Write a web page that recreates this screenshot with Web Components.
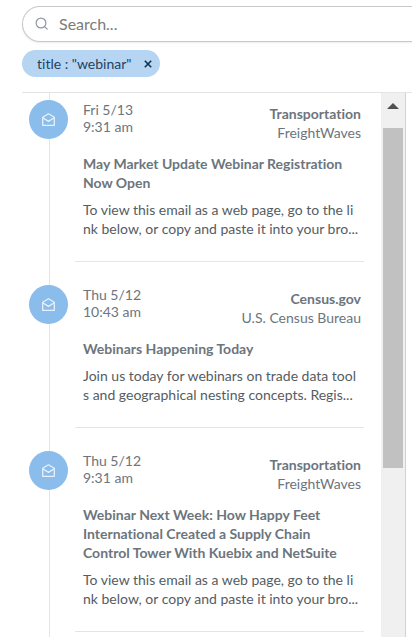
<!DOCTYPE html>
<html lang="en">
<head>
<meta charset="utf-8">
<meta name="viewport" content="width=device-width, initial-scale=1">
<title>Mail search</title>
<style>
    body {
        margin: 0;
        background: #fff;
        color: #6c757d;
        font-family: Lato, "Open Sans", sans-serif;
        font-size: 14px;
        font-variant-ligatures: none;
    }
</style>
</head>
<body>
<mail-panel>
    <search-box slot="search" placeholder="Search..."></search-box>
    <filter-chip slot="filters">title : "webinar"</filter-chip>

    <mail-item>
        <span slot="date">Fri 5/13</span>
        <span slot="time">9:31 am</span>
        <span slot="sender">Transportation</span>
        <span slot="company">FreightWaves</span>
        <span slot="title">May Market Update Webinar Registration<br>Now Open</span>
        To view this email as a web page, go to the li<br>nk below, or copy and paste it into your bro...
    </mail-item>
    <mail-item>
        <span slot="date">Thu 5/12</span>
        <span slot="time">10:43 am</span>
        <span slot="sender">Census.gov</span>
        <span slot="company">U.S. Census Bureau</span>
        <span slot="title">Webinars Happening Today</span>
        Join us today for webinars on trade data tool<br>s and geographical nesting concepts. Regis...
    </mail-item>
    <mail-item>
        <span slot="date">Thu 5/12</span>
        <span slot="time">9:31 am</span>
        <span slot="sender">Transportation</span>
        <span slot="company">FreightWaves</span>
        <span slot="title">Webinar Next Week: How Happy Feet<br>International Created a Supply Chain<br>Control Tower With Kuebix and NetSuite</span>
        To view this email as a web page, go to the li<br>nk below, or copy and paste it into your bro...
    </mail-item>
</mail-panel>

<script>
class MailPanel extends HTMLElement {
    constructor() {
        super();
        this.attachShadow({ mode: 'open' });
        this.shadowRoot.innerHTML = `
        <style>
        :host{
            display: flex;
            flex-direction: column;
            box-sizing: border-box;
            min-height: 100vh;
            padding: 6px 0 0 22px;
        }
        .filters{
            display: flex;
            padding: 8px 0 15px;
        }
        .body{
            flex: 1;
            display: flex;
            border-top: 1px solid #e2e4e8;
            padding-right: 6px;
        }
        .feed{
            flex: 1;
            min-width: 0;
            position: relative;
            padding: 7px 17px 0 7px;
        }
        /* timeline line, runs behind the round icons */
        .feed::before{
            content: "";
            position: absolute;
            top: 0;
            bottom: 0;
            left: 27px;
            border-left: 1px solid #e2e4e8;
        }
        </style>
        <slot name="search"></slot>
        <div class="filters"><slot name="filters"></slot></div>
        <div class="body">
            <div class="feed"><slot></slot></div>
            <scroll-rail></scroll-rail>
        </div>`;
    }
}

class SearchBox extends HTMLElement {
    constructor() {
        super();
        this.attachShadow({ mode: 'open' });
        this.shadowRoot.innerHTML = `
        <style>
        :host{
            display: block;
        }
        label{
            display: flex;
            align-items: center;
            gap: 10px;
            box-sizing: border-box;
            height: 36px;
            padding-left: 12px;
            border: 1px solid #c8c8c8;
            border-right: 0;
            border-radius: 18px 0 0 18px;
            box-shadow: 0 1px 2px rgba(0,0,0,.08);
        }
        svg{
            flex: none;
            width: 14px;
            height: 14px;
        }
        input{
            flex: 1;
            min-width: 0;
            padding: 0;
            border: 0;
            outline: 0;
            background: none;
            color: #495057;
            font: 16px/24px Lato, "Open Sans", sans-serif;
        }
        input::placeholder{
            color: #7b7b7b;
            opacity: 1;
        }
        </style>
        <label>
            <svg viewBox="0 0 14 14" fill="none" stroke="#8f96a3" stroke-width="1.2" stroke-linecap="round">
                <circle cx="6" cy="6" r="4.9"/>
                <path d="M9.6 9.6l2.6 2.6"/>
            </svg>
            <input type="text" aria-label="Search">
        </label>`;
    }

    connectedCallback() {
        this.shadowRoot.querySelector('input').placeholder = this.getAttribute('placeholder') || '';
    }
}

class FilterChip extends HTMLElement {
    constructor() {
        super();
        this.attachShadow({ mode: 'open' });
        this.shadowRoot.innerHTML = `
        <style>
        :host{
            display: flex;
            align-items: center;
            gap: 12px;
            height: 27px;
            padding: 0 8px 0 15px;
            border-radius: 14px;
            background: #b5d5f3;
            color: #24425e;
        }
        button{
            display: flex;
            padding: 0;
            border: 0;
            background: none;
            color: #12304c;
            cursor: pointer;
        }
        svg{
            width: 8px;
            height: 8px;
        }
        </style>
        <span><slot></slot></span>
        <button type="button" aria-label="Remove filter">
            <svg viewBox="0 0 8 8" fill="none" stroke="currentColor" stroke-width="1.6"><path d="M.8 .8l6.4 6.4M7.2 .8L.8 7.2"/></svg>
        </button>`;
    }

    connectedCallback() {
        this.shadowRoot.querySelector('button').addEventListener('click', () => this.remove());
    }
}

class MailItem extends HTMLElement {
    constructor() {
        super();
        this.attachShadow({ mode: 'open' });
        this.shadowRoot.innerHTML = `
        <style>
        :host{
            display: flex;
            gap: 7px;
            position: relative;
            margin-bottom: 23px;
        }
        :host(:last-of-type){
            margin-bottom: 0;
        }
        .icon{
            flex: none;
            display: flex;
            align-items: center;
            justify-content: center;
            width: 39px;
            height: 39px;
            border-radius: 50%;
            background: #8abcec;
        }
        svg{
            width: 13px;
            height: 13px;
        }
        article{
            flex: 1;
            min-width: 0;
            padding: 1px 3px 23px 8px;
            border-bottom: 1px solid #e4e5e7;
        }
        header{
            display: flex;
            justify-content: space-between;
            margin-bottom: 12px;
        }
        .when, .who{
            display: flex;
            flex-direction: column;
        }
        .when{
            line-height: 17px;
        }
        .who{
            padding-top: 3px;
            line-height: 19px;
            text-align: right;
        }
        .sender{
            font-weight: bold;
        }
        h3{
            margin: 0 0 8px;
            font-size: 14px;
            line-height: 19px;
        }
        p{
            margin: 0;
            color: #555c63;
            line-height: 19px;
            white-space: nowrap;
        }
        </style>
        <div class="icon">
            <svg viewBox="0 0 13 13" fill="none" stroke="#e8f2fc" stroke-width="1.3" stroke-linejoin="round">
                <path d="M.7 4.3L6.5 .8l5.8 3.5v8H.7z"/>
                <path d="M.7 4.7l5.8 3.7 5.8-3.7"/>
            </svg>
        </div>
        <article>
            <header>
                <div class="when"><slot name="date"></slot><slot name="time"></slot></div>
                <div class="who">
                    <div class="sender"><slot name="sender"></slot></div>
                    <div><slot name="company"></slot></div>
                </div>
            </header>
            <h3><slot name="title"></slot></h3>
            <p><slot></slot></p>
        </article>`;
    }
}

class ScrollRail extends HTMLElement {
    constructor() {
        super();
        this.attachShadow({ mode: 'open' });
        this.shadowRoot.innerHTML = `
        <style>
        :host{
            flex: none;
            display: flex;
            flex-direction: column;
            width: 24px;
            background: #f0f0f0;
            border-right: 1px solid #cfd1d4;
        }
        button{
            display: flex;
            align-items: center;
            justify-content: center;
            height: 35px;
            padding: 0 0 9px;
            border: 0;
            background: none;
        }
        svg{
            width: 12px;
            height: 6px;
        }
        .thumb{
            height: 340px;
            margin: 0 2px;
            background: #c1c1c1;
        }
        </style>
        <button type="button" aria-label="Scroll up">
            <svg viewBox="0 0 12 6" fill="#505050"><path d="M0 6L6 0l6 6z"/></svg>
        </button>
        <div class="thumb"></div>`;
    }
}

customElements.define('scroll-rail', ScrollRail);
customElements.define('search-box', SearchBox);
customElements.define('filter-chip', FilterChip);
customElements.define('mail-item', MailItem);
customElements.define('mail-panel', MailPanel);
</script>
</body>
</html>
